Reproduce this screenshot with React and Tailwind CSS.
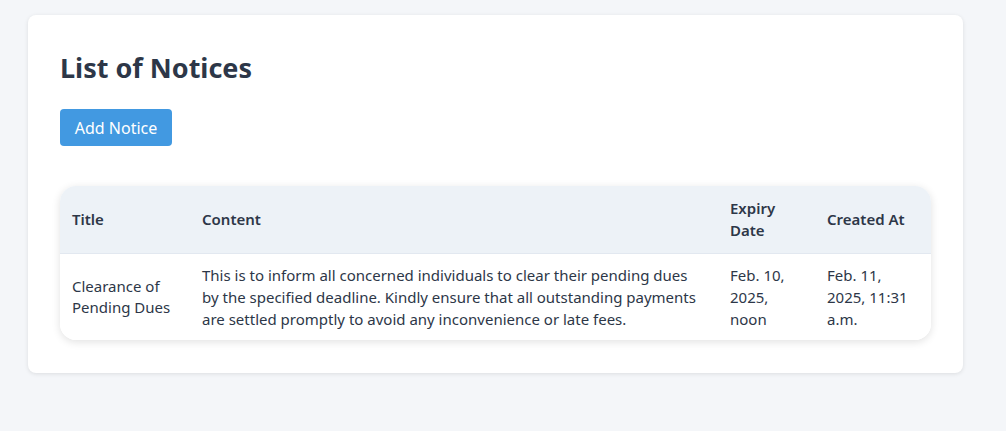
export default function App() {
  const notices = [
    {
      title: 'Clearance of Pending Dues',
      content:
        'This is to inform all concerned individuals to clear their pending dues by the specified deadline. Kindly ensure that all outstanding payments are settled promptly to avoid any inconvenience or late fees.',
      expiry: 'Feb. 10, 2025, noon',
      created: 'Feb. 11, 2025, 11:31 a.m.',
    },
  ];

  return (
    <div className="min-h-[431px] bg-[#f4f6f9] px-[28px] pt-[15px] font-['Noto_Sans',sans-serif] text-[#2d3748]">
      <div className="w-[935px] rounded-lg bg-white p-8 pb-[33px] shadow-[0_1px_4px_rgba(0,0,0,0.1)]">
        <h1 className="mt-[3px] text-[27px] font-bold leading-[36px] text-[#2d3748]">List of Notices</h1>
        <button className="mt-[23px] h-[37px] w-[112px] rounded bg-[#4299e1] text-[16px] text-white">
          Add Notice
        </button>
        <div className="mt-[40px] overflow-hidden rounded-2xl shadow-[0_2px_8px_rgba(0,0,0,0.12)]">
          <table className="w-full table-fixed border-collapse text-left text-[15px]">
            <colgroup>
              <col className="w-[130px]" />
              <col />
              <col className="w-[97px]" />
              <col className="w-[116px]" />
            </colgroup>
            <thead>
              <tr className="bg-[#edf2f7] border-b border-[#e2e8f0]">
                <th className="px-3 py-3 font-semibold leading-[21.5px]">Title</th>
                <th className="px-3 py-3 font-semibold leading-[21.5px]">Content</th>
                <th className="px-3 py-3 font-semibold leading-[21.5px]">Expiry Date</th>
                <th className="px-3 py-3 font-semibold leading-[21.5px]">Created At</th>
              </tr>
            </thead>
            <tbody>
              {notices.map((n) => (
                <tr key={n.title} className="bg-white text-[#2d3748]">
                  <td className="px-3 py-[10px] leading-[21px]">{n.title}</td>
                  <td className="px-3 py-[10px] leading-[22px]">{n.content}</td>
                  <td className="px-3 py-[10px] leading-[22px]">{n.expiry}</td>
                  <td className="px-3 py-[10px] leading-[22px]">{n.created}</td>
                </tr>
              ))}
            </tbody>
          </table>
        </div>
      </div>
    </div>
  );
}
